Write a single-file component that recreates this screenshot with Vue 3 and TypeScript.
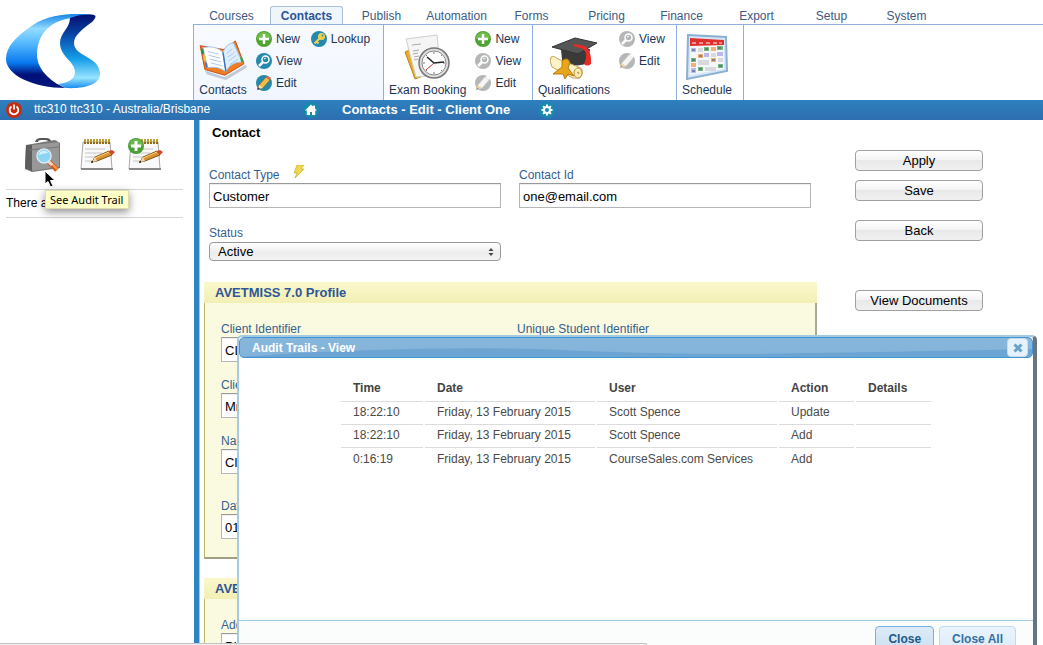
<script setup lang="ts">
import { ref } from 'vue'

type ActionIcon = 'new' | 'lookup' | 'view' | 'edit' | 'viewOff' | 'editOff'
interface RibbonAction { label: string; icon: ActionIcon }
interface RibbonGroup { id: string; label: string; active?: boolean; columns: RibbonAction[][] }
interface AuditRow { time: string; date: string; user: string; action: string; details: string }

const tabs: string[] = ['Courses', 'Contacts', 'Publish', 'Automation', 'Forms', 'Pricing', 'Finance', 'Export', 'Setup', 'System']
const activeTab = ref('Contacts')

const groups: RibbonGroup[] = [
  {
    id: 'contacts', label: 'Contacts', active: true,
    columns: [
      [{ label: 'New', icon: 'new' }, { label: 'View', icon: 'view' }, { label: 'Edit', icon: 'edit' }],
      [{ label: 'Lookup', icon: 'lookup' }],
    ],
  },
  {
    id: 'exam', label: 'Exam Booking',
    columns: [[{ label: 'New', icon: 'new' }, { label: 'View', icon: 'viewOff' }, { label: 'Edit', icon: 'editOff' }]],
  },
  {
    id: 'qualifications', label: 'Qualifications',
    columns: [[{ label: 'View', icon: 'viewOff' }, { label: 'Edit', icon: 'editOff' }]],
  },
  { id: 'schedule', label: 'Schedule', columns: [] },
]

const contactType = ref('Customer')
const contactId = ref('one@email.com')
const status = ref('Active')
const clientIdentifier = ref('CL1')
const studentIdentifier = ref('')
const clientTitle = ref('Mr')
const clientName = ref('Client')
const birthDate = ref('01/01/1980')
const address = ref('Pl')

const auditRows: AuditRow[] = [
  { time: '18:22:10', date: 'Friday, 13 February 2015', user: 'Scott Spence', action: 'Update', details: '' },
  { time: '18:22:10', date: 'Friday, 13 February 2015', user: 'Scott Spence', action: 'Add', details: '' },
  { time: '0:16:19', date: 'Friday, 13 February 2015', user: 'CourseSales.com Services', action: 'Add', details: '' },
]
const dialogOpen = ref(true)
</script>

<template>
  <div class="app">
    <header class="top">
      <a class="logo" href="#" aria-label="Home">
        <svg width="96" height="76" viewBox="0 0 96 76">
          <defs>
            <linearGradient id="lgC" x1="0" y1="0" x2="0" y2="1">
              <stop offset="0" stop-color="#1485e8" /><stop offset=".2" stop-color="#92dcff" />
              <stop offset=".38" stop-color="#5bbcff" /><stop offset=".66" stop-color="#0879ee" />
              <stop offset=".82" stop-color="#020f78" /><stop offset="1" stop-color="#02197e" />
            </linearGradient>
            <linearGradient id="lgS" x1="0" y1="0" x2="0" y2="1">
              <stop offset="0" stop-color="#020f70" /><stop offset=".22" stop-color="#07399a" />
              <stop offset=".6" stop-color="#149de9" /><stop offset=".86" stop-color="#97e4ff" />
              <stop offset="1" stop-color="#1a8df0" />
            </linearGradient>
          </defs>
          <path fill="url(#lgC)" d="M88 2C72 0 44 0 27 12C10 23 0 34 0 46C0 62 27 75 60 75C48 71 31 58 31 42C31 19 47 7 66 5Z" />
          <path fill="url(#lgS)" d="M64 5C73 1 84 1 88 2C91 3 89 6 86 9C77 16 68 22 68 30C68 44 94 43 94 61C94 71 80 76 60 75C57 74 54 72 52 71C61 70 68 67 69 60C70 49 54 44 54 30C54 20 64 15 64 5Z" />
        </svg>
      </a>
      <div class="menu">
        <nav class="tabs">
          <a v-for="t in tabs" :key="t" href="#" class="tab" :class="{ active: t === activeTab }" @click.prevent="activeTab = t">{{ t }}</a>
        </nav>
        <div class="ribbon">
          <section v-for="g in groups" :key="g.id" class="group" :class="[g.id, { current: g.active }]">
            <a href="#" class="big">
              <svg v-if="g.id === 'contacts'" width="48" height="40" viewBox="0 0 50 42">
                <path d="M6 32L27 39L49 26L50 29L28 42L8 36Z" fill="#8f9bae" opacity=".5" />
                <path d="M1 6L6 31L27 37L47 25L38 1L26 10Z" fill="#ef7e22" stroke="#c64b12" />
                <path d="M4 8Q17 5 25 13L28 33Q19 27 9 29Z" fill="#fff" stroke="#a6c6ec" />
                <path d="M25 13Q28 4 36 3L45 23Q33 23 28 33Z" fill="#ddefff" stroke="#9cc1ea" />
                <path d="M9 12L21 15M10 16L22 19M11 20L23 23M12 24L24 27M29 14L35 9M30 18L37 13M31 22L39 16M32 26L41 20" stroke="#a9c4ea" stroke-width="1" />
                <path d="M25 13L28 33" stroke="#3f73bd" stroke-width="1.5" />
                <path d="M2 10L4 9L5 14L3 15Z" fill="#278e3e" /><path d="M4 16L6 16L7 22L5 22Z" fill="#f5c42c" /><path d="M6 24L8 24L9 29L7 29Z" fill="#327bc9" /><path d="M43 18L45 18L47 23L44 23Z" fill="#31a845" />
              </svg>
              <svg v-else-if="g.id === 'exam'" width="48" height="46" viewBox="0 0 48 46">
                <path d="M1 18L12 13L19 42L11 45Z" fill="#e7ad25" stroke="#c08618" />
                <path d="M2 5L33 1L37 41L12 43Z" fill="#f5f5f5" stroke="#d0d0d0" />
                <path d="M8 11L17 10M9 17L15 16M9 20L14 19M10 23L15 22M10 26L14 25" stroke="#aaa" />
                <circle cx="30" cy="29" r="15" fill="#dedede" stroke="#777" stroke-width="1.5" />
                <circle cx="30" cy="29" r="12" fill="#fff" stroke="#888" />
                <path d="M30 18v2M30 38v2M19 29h2M39 29h2M22 21l1 1M38 21l-1 1M22 37l1-1M38 37l-1-1" stroke="#777" />
                <path d="M23 23L30 29L40 28" fill="none" stroke="#222" stroke-width="1.5" />
                <path d="M30 29L22 36" stroke="#d22f2f" />
              </svg>
              <svg v-else-if="g.id === 'qualifications'" width="48" height="44" viewBox="0 0 48 44">
                <path d="M11 13L40 13L38 27Q24 33 12 24Z" fill="#3a3a3a" />
                <path d="M2 11L25 2L47 7L28 18Z" fill="#555" stroke="#333" />
                <path d="M24 8L35 10Q42 15 41 28Q37 31 34 28Q39 18 33 13L23 10Z" fill="#e52b22" />
                <path d="M1 21Q4 19 8 23L31 32Q34 37 30 42L23 42L2 31Q-1 25 1 21Z" fill="#fff3c8" stroke="#c6a45d" />
                <ellipse cx="28" cy="37" rx="4" ry="5" fill="#fbe9ae" stroke="#b4914c" /><path d="M27 37q2-2 2 1" fill="none" stroke="#b4914c" />
                <path d="M12 25Q18 20 20 27L18 32L24 40L18 38L15 43L13 38L3 38L12 31Z" fill="#e6a51b" stroke="#b87a10" />
              </svg>
              <svg v-else width="42" height="46" viewBox="0 0 42 46">
                <path d="M2 1L40 3L41 37L1 45Z" fill="#d4e6fa" stroke="#8cb0d0" stroke-width="2" />
                <path d="M4 4L38 6L38 35L4 41Z" fill="#f5f6f8" />
                <path d="M4 4L38 6L38 11L4 12Z" fill="#df2f2d" />
                <path d="M6 9h4M13 9h4M20 9h4M27 9h4M33 9h3" stroke="#fff" stroke-width="1" />
                <path d="M5 14h5v4H5zM18 19h5v4h-5zM31 18h6v4h-6zM5 34h5v5H5z" fill="#b9b9ef" />
                <path d="M18 13h5v4h-5zM31 12h6v4h-6zM5 24h5v4H5zM12 33h5v4h-5zM32 30h5v4h-5z" fill="#79b781" />
                <path d="M25 13h5v4h-5zM12 20h5v4h-5zM25 24h5v4h-5zM5 29h5v4H5z" fill="#f4ae78" />
                <path d="M12 14h5v4h-5zM25 19h5v4h-5zM12 26h11v5H12zM32 24h5v4h-5zM19 33h11v4H19z" fill="#d7d9df" />
                <path d="M6 16h3M19 15h3M32 14h3M13 22h3M6 26h3M26 26h3M13 35h3M6 37h3M33 32h3" stroke="#374e65" />
              </svg>
              <span>{{ g.label }}</span>
            </a>
            <div v-for="(col, ci) in g.columns" :key="ci" class="actions">
              <a v-for="a in col" :key="a.label" href="#" class="action">
                <svg width="16" height="16" viewBox="0 0 16 16">
                  <circle cx="8" cy="8" r="8" :fill="a.icon === 'new' ? '#4fa331' : a.icon.endsWith('Off') ? '#b4b6b7' : '#2389ad'" />
                  <path v-if="a.icon === 'new'" d="M1 8a7 7 0 0 1 14 0Z" fill="#84c95f" opacity=".65" />
                  <path v-if="a.icon === 'new'" d="M8 3v10M3 8h10" stroke="#fff" stroke-width="2.5" />
                  <g v-else-if="a.icon === 'lookup'" fill="none">
                    <path d="M9 7L3.500 12.500M5.500 10.500l2 2" stroke="#f6cf51" stroke-width="2" /><circle cx="10.500" cy="5.500" r="3.500" fill="#f6cf51" /><circle cx="11.500" cy="4.500" r="1" fill="#2389ad" />
                  </g>
                  <g v-else-if="a.icon.startsWith('view')" stroke="#fff" fill="none">
                    <circle cx="9.500" cy="6.500" r="3.500" stroke-width="1.500" /><path d="M7 9L3 13" stroke-width="2.500" /><path d="M8 6l2-1" />
                  </g>
                  <g v-else>
                    <path d="M3 10L10 2L14 5L7 13L2 14Z" :fill="a.icon === 'edit' ? '#f4ba42' : '#f8f6f2'" :stroke="a.icon === 'edit' ? '#75551c' : '#d5d5d5'" stroke-width=".6" />
                    <path d="M10 2L12 1L15 3L14 5Z" :fill="a.icon === 'edit' ? '#e56c57' : '#fff'" />
                    <path d="M3 10L7 13L2 14Z" :fill="a.icon === 'edit' ? '#f9e4bd' : '#f1d79a'" /><path d="M2 12L4 14L1 15Z" :fill="a.icon === 'edit' ? '#333' : '#999'" />
                  </g>
                </svg>
                <span>{{ a.label }}</span>
              </a>
            </div>
          </section>
        </div>
      </div>
    </header>

    <div class="bar">
      <div class="session">
        <button class="icon-button" aria-label="Log out">
          <svg width="16" height="16" viewBox="0 0 16 16"><circle cx="8" cy="8" r="8" fill="#c42d12" /><path d="M5.500 4.500a4.300 4.300 0 1 0 5 0M8 2.500v5" fill="none" stroke="#fff" stroke-width="1.800" /></svg>
        </button>
        <span>ttc310 ttc310 - Australia/Brisbane</span>
      </div>
      <div class="crumb">
        <button class="icon-button" aria-label="Home">
          <svg width="16" height="16" viewBox="0 0 16 16"><circle cx="8" cy="8" r="8" fill="#168bab" /><path d="M8 2.500L2 8.500H3.800V13H7V10h2v3h3.200V8.500H14L12 6.500V3.500h-1.700v1.300Z" fill="#fff" /></svg>
        </button>
        <h1>Contacts - Edit - Client One</h1>
        <button class="icon-button gear" aria-label="Settings">
          <svg width="16" height="16" viewBox="0 0 16 16"><circle cx="8" cy="8" r="8" fill="#168bab" /><circle cx="8" cy="8" r="3" fill="none" stroke="#fff" stroke-width="2" /><path d="M8 2.500v2M8 11.500v2M2.500 8h2M11.500 8h2M4.100 4.100l1.400 1.400M10.500 10.500l1.400 1.400M4.100 11.900l1.400-1.400M10.500 5.500l1.400-1.400" stroke="#fff" stroke-width="2" /></svg>
        </button>
      </div>
    </div>

    <div class="body">
      <aside class="side">
        <div class="tools">
          <button class="icon-button" aria-label="See Audit Trail">
            <svg width="36" height="36" viewBox="0 0 36 36">
              <path d="M10 5Q11 1 16 1L21 1Q25 1 26 4L23 4Q22 3 20 3L16 3Q13 3 13 5Z" fill="#555" />
              <path d="M1 8L30 3L35 6V31L7 35L0 32Z" fill="#747474" /><path d="M7 8L34 5V30L7 34Z" fill="#989898" /><path d="M1 8L7 8V34L0 31Z" fill="#5e5e5e" /><path d="M4 13L34 10" stroke="#777" />
              <path d="M24 25L32 33" stroke="#d65820" stroke-width="5" /><path d="M25 25L32 32" stroke="#ff9b49" stroke-width="2" /><path d="M23 24l4 4" stroke="#ddd" stroke-width="3" />
              <circle cx="19" cy="19" r="7" fill="#8dd4f5" stroke="#dbeaf2" stroke-width="1.5" /><path d="M14 18a5 5 0 0 1 9-2q-4 0-9 2" fill="#d6f2ff" />
            </svg>
          </button>
          <button v-for="n in 2" :key="n" class="icon-button" :aria-label="n === 1 ? 'View Notes' : 'Add Note'">
            <svg width="36" height="36" viewBox="0 0 36 36">
              <path d="M3 5H30L32 32H1Z" fill="#f9f9f9" stroke="#aaa" /><path d="M1 31H33V33H1Z" fill="#888" />
              <path d="M5 12h20M5 16h17M5 20h12M5 24h8" stroke="#c5c5c5" />
              <path d="M5 2v5M8 2v5M11 2v5M14 2v5M17 2v5M20 2v5M23 2v5M26 2v5M29 2v5" stroke="#8e6d14" stroke-width="2" /><path d="M5 2v3M8 2v3M11 2v3M14 2v3M17 2v3M20 2v3M23 2v3M26 2v3M29 2v3" stroke="#efcf51" />
              <path d="M12 25L15 20L29 14L32 18L17 24Z" fill="#dc902f" stroke="#80541f" /><path d="M15 21L29 15" stroke="#ffd072" /><path d="M12 25L15 20L17 24Z" fill="#f1d9ac" /><path d="M29 14L32 13L35 15L32 18Z" fill="#d8412b" /><path d="M11 25h2" stroke="#222" stroke-width="1.5" />
              <g v-if="n === 2"><circle cx="8" cy="9" r="8" fill="#4b9e35" /><path d="M1 9a7 7 0 0 1 14 0Z" fill="#83c662" opacity=".6" /><path d="M8 4v10M3 9h10" stroke="#fff" stroke-width="3" /></g>
            </svg>
          </button>
        </div>
        <p class="notes">There are no notes</p>
        <div class="tip" role="tooltip">See Audit Trail</div>
        <svg class="cursor" width="12" height="18" viewBox="0 0 12 18"><path d="M1 1V14L4 11.500L6.500 17L9 16L6.500 10.500H11Z" fill="#000" stroke="#fff" /></svg>
      </aside>

      <main class="main">
        <form class="form" @submit.prevent>
          <h2>Contact</h2>
          <div class="fields">
            <div class="field">
              <label for="ctype">Contact Type
                <svg width="12" height="14" viewBox="0 0 12 14"><path d="M4 0H11L8 4H11L2 13L4 8H1Z" fill="#f0d84c" stroke="#c7ab32" stroke-width=".7" /></svg>
              </label>
              <input id="ctype" v-model="contactType" type="text">
            </div>
            <div class="field">
              <label for="cid">Contact Id</label>
              <input id="cid" v-model="contactId" type="text">
            </div>
            <div class="field">
              <label for="status">Status</label>
              <div class="pick">
                <select id="status" v-model="status"><option>Active</option><option>Inactive</option></select>
                <svg width="6" height="8" viewBox="0 0 6 8"><path d="M3 0L5.500 3H.5ZM3 8L.5 5H5.500Z" fill="#444" /></svg>
              </div>
            </div>
          </div>

          <section class="panel">
            <h3>AVETMISS 7.0 Profile</h3>
            <div class="panel-body">
              <div class="field"><label for="p1">Client Identifier</label><input id="p1" v-model="clientIdentifier" type="text"></div>
              <div class="field"><label for="p2">Unique Student Identifier</label><input id="p2" v-model="studentIdentifier" type="text"></div>
              <div class="field first"><label for="p3">Client Title</label><input id="p3" v-model="clientTitle" type="text"></div>
              <div class="field first"><label for="p4">Name</label><input id="p4" v-model="clientName" type="text"></div>
              <div class="field first spaced"><label for="p5">Date of Birth</label><input id="p5" v-model="birthDate" type="text"></div>
            </div>
          </section>
          <section class="panel">
            <h3>AVETMISS Address</h3>
            <div class="panel-body">
              <div class="field"><label for="a1">Address</label><input id="a1" v-model="address" type="text"></div>
            </div>
          </section>
        </form>
        <div class="buttons">
          <button class="push">Apply</button>
          <button class="push">Save</button>
          <button class="push back">Back</button>
          <button class="push docs">View Documents</button>
        </div>
      </main>
    </div>

    <section v-if="dialogOpen" class="dialog" role="dialog" aria-labelledby="dlg">
      <div class="dialog-title">
        <svg class="gloss" viewBox="0 0 794 19" preserveAspectRatio="none"><path d="M0 19Q150 8 300 11Q400 16 500 16Q660 14 794 11V19Z" fill="#6ca5d1" /></svg>
        <h2 id="dlg">Audit Trails - View</h2>
        <button class="x" aria-label="Close dialog" @click="dialogOpen = false">
          <svg width="10" height="10" viewBox="0 0 10 10"><path d="M1.500 1.500L8.500 8.500M8.500 1.500L1.500 8.500" stroke="#68a3d0" stroke-width="3" /></svg>
        </button>
      </div>
      <div class="dialog-body">
        <table>
          <colgroup><col class="c-time"><col class="c-date"><col class="c-user"><col class="c-action"><col class="c-details"></colgroup>
          <thead><tr><th>Time</th><th>Date</th><th>User</th><th>Action</th><th>Details</th></tr></thead>
          <tbody>
            <tr v-for="(r, i) in auditRows" :key="i"><td>{{ r.time }}</td><td>{{ r.date }}</td><td>{{ r.user }}</td><td>{{ r.action }}</td><td>{{ r.details }}</td></tr>
          </tbody>
        </table>
      </div>
      <div class="dialog-foot">
        <button class="soft focus" @click="dialogOpen = false">Close</button>
        <button class="soft" @click="dialogOpen = false">Close All</button>
      </div>
    </section>
    <div class="hint"></div>
  </div>
</template>

<style>
body { margin: 0; background: #fff; }
</style>

<style scoped>
* { box-sizing: border-box; }
.app { position: relative; display: flex; flex-direction: column; height: 100vh; overflow: hidden; font: 12px/16px "Liberation Sans", Arial, sans-serif; color: #000; }
a { color: inherit; text-decoration: none; }
h1, h2, h3, p { margin: 0; }
svg { display: block; flex: none; }
button { font: inherit; padding: 0; }
.icon-button { border: 0; background: none; display: block; }

.top { display: flex; flex: none; height: 100px; }
.logo { flex: none; width: 193px; padding: 13px 0 0 6px; }
.menu { flex: 1; display: flex; flex-direction: column; }
.tabs { display: flex; height: 25px; align-items: flex-end; padding-left: 1px; border-bottom: 1px solid #8fb0de; color: #3d5a83; }
.tab { width: 73px; height: 18px; padding-top: 2px; margin: 0 1px; text-align: center; white-space: nowrap; }
.tab.active { border: 1px solid #a9c0de; border-bottom: 0; border-radius: 3px 3px 0 0; padding-top: 1px; background: #eff6fe; color: #2c5596; font-weight: bold; }
.ribbon { flex: 1; display: flex; border-left: 1px solid #8fb0de; color: #1b3557; }
.group { display: flex; border-right: 1px solid #8fb0de; padding-left: 5px; }
.current { background: linear-gradient(#f8faff, #f1f6fe); }
.big { display: flex; flex-direction: column; justify-content: flex-end; align-items: center; padding-bottom: 2px; white-space: nowrap; }
.big svg { margin-bottom: 2px; }
.actions { display: flex; flex-direction: column; gap: 6px; padding: 6px 0 0 9px; }
.action { display: flex; gap: 4px; height: 16px; }
.contacts { width: 190px; }
.exam { width: 149px; }
.qualifications { width: 144px; }
.schedule { width: 67px; }

.bar { flex: none; display: flex; height: 20px; align-items: center; background: linear-gradient(#2e80be, #2d6eb0); color: #fff; }
.session { display: flex; gap: 12px; align-items: center; width: 303px; padding-left: 6px; white-space: nowrap; }
.session span { padding-bottom: 2px; }
.crumb { display: flex; align-items: center; gap: 23px; }
.gear { margin-left: 6px; }
h1 { font-size: 13px; line-height: 20px; }

.body { flex: 1; min-height: 0; display: flex; }
.side { position: relative; flex: none; width: 199px; padding: 17px 11px 0 6px; border-right: 5px solid #2e83c3; }
.tools { display: flex; align-items: flex-start; gap: 12px; height: 52px; padding-left: 19px; }
.tools .icon-button:first-child { margin-right: 7px; }
.notes { padding: 5px 0 6px; border: 1px solid #d6d6d6; border-width: 1px 0; }
.tip { position: absolute; left: 45px; top: 70px; padding: 0 5px 0 4px; height: 19px; border: 1px solid #dedcae; background: #ffffc8; box-shadow: 0 3px 8px rgba(0, 0, 0, .45); font: 11px/17px "Noto Sans", sans-serif; white-space: nowrap; }
.cursor { position: absolute; left: 44px; top: 50px; }

.main { flex: 1; min-width: 0; display: flex; gap: 38px; padding: 0 60px 0 4px; border-left: 1px solid #b4c3d0; }
.form { flex: 1; min-width: 0; }
.form h2 { padding: 4px 8px; font-size: 13px; line-height: 17px; }
.fields { display: grid; grid-template-columns: 1fr 1fr; column-gap: 18px; row-gap: 17px; padding: 22px 6px 0 5px; }
.field { display: flex; flex-direction: column; }
.field label { display: flex; gap: 13px; height: 16px; line-height: 17px; color: #366092; white-space: nowrap; }
.field label svg { margin-top: -2px; }
.field input { width: 100%; height: 25px; border: 1px solid #b5b5b5; border-top-color: #999; border-radius: 0; padding: 1px 3px 0; background: #fff; box-shadow: inset 0 1px 1px #eee; font: 13px "Liberation Sans", Arial, sans-serif; color: #000; }
.pick { display: flex; align-items: center; height: 19px; margin-top: 1px; border: 1px solid #999; border-radius: 4px; padding-right: 6px; background: linear-gradient(#fff, #ececec 60%, #f3f3f3); }
.pick select { flex: 1; appearance: none; border: 0; padding: 0 8px; background: none; font: 13px/17px "Liberation Sans", Arial, sans-serif; color: #000; }
.panel { margin-top: 21px; }
.panel + .panel { margin-top: 19px; }
.panel h3 { height: 21px; padding-left: 11px; font-size: 13px; line-height: 21px; color: #2d5796; background: linear-gradient(#faf8cc, #f3efb4); }
.panel-body { display: grid; grid-template-columns: 1fr 1fr; column-gap: 16px; row-gap: 15px; padding: 18px 18px 18px 16px; border: 1px solid #b9b766; border-width: 0 2px 2px 1px; border-right-color: #a9aa94; border-bottom-color: #a1a083; background: #fafae0; }
.panel-body .first { grid-column: 1; }
.panel-body .spaced { margin-top: 9px; }

.buttons { flex: none; width: 128px; display: flex; flex-direction: column; gap: 9px; padding-top: 30px; }
.push { height: 21px; border: 1px solid #a0a0a0; border-radius: 4px; background: linear-gradient(#fff, #f4f4f4 45%, #e9e9e9 50%, #f0f0f0); font-size: 13px; line-height: 19px; color: #000; }
.back { margin-top: 10px; }
.docs { margin-top: 40px; }

.dialog { position: absolute; left: 237px; right: 6px; top: 335px; bottom: -12px; display: flex; flex-direction: column; border: 2px solid #a5cbe2; border-right: 4px solid #66757f; border-radius: 5px 5px 0 0; background: #fff; }
.dialog-title { position: relative; flex: none; display: flex; align-items: center; justify-content: space-between; height: 21px; padding: 0 4px 0 12px; border: 1px solid #4394d5; border-radius: 5px; background: linear-gradient(#87b6db, #84b3da); color: #fff; }
.gloss { position: absolute; inset: 0; width: 100%; height: 100%; border-radius: 4px; }
.dialog-title h2 { position: relative; padding-top: 1px; font-size: 12px; line-height: 19px; }
.x { position: relative; display: grid; place-items: center; width: 21px; height: 19px; border: 1px solid #c5dcec; border-radius: 4px; background: #e5f1fb; }
.dialog-body { flex: 1; padding: 17px 100px 0; color: #4a4a4a; }
table { width: 100%; table-layout: fixed; border-collapse: separate; border-spacing: 2px 0; }
th, td { height: 23px; padding: 0 12px; border-bottom: 1px solid #dcdcdc; text-align: left; white-space: nowrap; }
td { padding-bottom: 2px; }
th { height: 27px; color: #444; }
tbody tr:last-child td { border-bottom: 0; }
.c-time { width: 82px; }
.c-date { width: 170px; }
.c-user { width: 180px; }
.c-action { width: 75px; }
.dialog-foot { flex: none; display: flex; justify-content: flex-end; gap: 5px; height: 35px; padding: 5px 17px 0 0; border-top: 1px solid #a5cbe2; background: #fbfdfd; }
.soft { height: 26px; padding: 0 12px; border: 1px solid #c0d9ed; border-radius: 4px; background: linear-gradient(#eaf4fd, #dcebf8); font-size: 12px; font-weight: bold; color: #3470a5; }
.soft.focus { border-color: #74b2e2; background: linear-gradient(#deebf7, #cae0f3); color: #1d5987; }
.hint { position: absolute; left: 0; bottom: 0; width: 62%; height: 2px; border-top: 1px solid #c4c4c4; border-right: 1px solid #c4c4c4; border-radius: 0 3px 0 0; background: #eee; }
</style>
